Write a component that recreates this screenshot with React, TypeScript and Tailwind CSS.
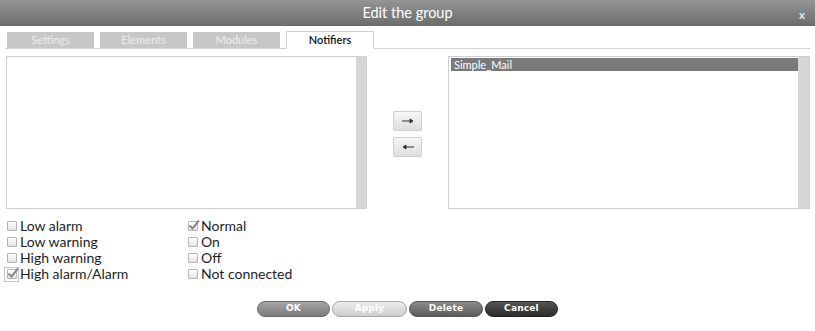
import { useState } from "react";

type Flag = { label: string; checked: boolean; focus?: boolean };

const LEFT_FLAGS: Flag[] = [
  { label: "Low alarm", checked: false },
  { label: "Low warning", checked: false },
  { label: "High warning", checked: false },
  { label: "High alarm/Alarm", checked: true, focus: true },
];

const RIGHT_FLAGS: Flag[] = [
  { label: "Normal", checked: true },
  { label: "On", checked: false },
  { label: "Off", checked: false },
  { label: "Not connected", checked: false },
];

const TABS = [
  { name: "Settings", w: "w-[87px]" },
  { name: "Elements", w: "w-[87px]" },
  { name: "Modules", w: "w-[87px]" },
  { name: "Notifiers", w: "w-[88px]" },
];

function CheckRow({ flag }: { flag: Flag }) {
  return (
    <div className="flex h-4 items-center">
      <span
        className={
          "flex h-[15px] w-[15px] items-center justify-center " +
          (flag.focus ? "border border-[#c8c8c8]" : "")
        }
      >
        <span className="relative block h-[10px] w-[10px] rounded-[1px] border border-[#b4b4b4] bg-gradient-to-b from-white to-[#e2e2e2]">
          {flag.checked && (
            <svg className="absolute -left-[1px] -top-[3px]" width="12" height="12" viewBox="0 0 12 12">
              <path d="M1.5 6.5 L4.5 9.5 L11 1.5" fill="none" stroke="#8a8a8a" strokeWidth="2" />
            </svg>
          )}
        </span>
      </span>
      <span className="pl-[1px] text-[14px] leading-4 text-[#1e1e1e]">{flag.label}</span>
    </div>
  );
}

function ArrowBtn({ dir }: { dir: "right" | "left" }) {
  return (
    <button className="flex h-[20px] w-[29px] items-center justify-center rounded-[2px] border border-[#cfcfcf] bg-gradient-to-b from-[#f7f7f7] to-[#dedede]">
      <svg width="14" height="6" viewBox="0 0 14 6">
        {dir === "right" ? (
          <path d="M1 3 H10 M9 1 L12 3 L9 5 Z" stroke="#333" strokeWidth="1" fill="#333" />
        ) : (
          <path d="M13 3 H4 M5 1 L2 3 L5 5 Z" stroke="#333" strokeWidth="1" fill="#333" />
        )}
      </svg>
    </button>
  );
}

function PillBtn({ label, cls }: { label: string; cls: string }) {
  return (
    <button
      className={
        "flex h-[16px] items-center justify-center rounded-full border font-['DejaVu_Sans',sans-serif] text-[9px] font-bold tracking-[0.2px] text-white " +
        cls
      }
    >
      {label}
    </button>
  );
}

export default function App() {
  const [tab, setTab] = useState("Notifiers");

  return (
    <div className="h-[331px] w-[815px] overflow-hidden bg-white font-['Lato',sans-serif]">
      {/* Title bar */}
      <div className="relative flex h-[26px] items-center justify-center bg-gradient-to-b from-[#959595] to-[#6c6c6c] text-white">
        <span className="text-[14.5px]">Edit the group</span>
        <span className="absolute right-[10px] top-[6px] text-[12px]">x</span>
      </div>

      {/* Tabs */}
      <div className="mx-[5px] mt-[6px] flex h-[17px] items-end gap-[6px] border-b border-[#d2d2d2] pl-[2px]">
        {TABS.map((t) =>
          t.name === tab ? (
            <button
              key={t.name}
              onClick={() => setTab(t.name)}
              className={"-mb-px h-[18px] border border-b-white border-[#d0d0d0] bg-white text-[11px] font-semibold text-[#111] " + t.w}
            >
              {t.name}
            </button>
          ) : (
            <button
              key={t.name}
              onClick={() => setTab(t.name)}
              className={"h-[16px] bg-[#c7c7c7] text-[11px] text-[#ececec] " + t.w}
            >
              {t.name}
            </button>
          )
        )}
      </div>

      {/* Lists */}
      <div className="mt-[7px] flex pl-[6px]">
        <div className="flex h-[153px] w-[361px] border border-[#cfcfcf]">
          <div className="flex-1" />
          <div className="w-[10px] bg-[#d6d6d6]" />
        </div>
        <div className="flex w-[81px] flex-col items-center justify-center gap-[6px] pt-[3px]">
          <ArrowBtn dir="right" />
          <ArrowBtn dir="left" />
        </div>
        <div className="flex h-[153px] w-[362px] border border-[#cfcfcf]">
          <div className="flex-1 pl-[2px] pt-[1px]">
            <div className="h-[13px] bg-[#7a7a7a] pl-[3px] text-[11px] leading-[13px] text-white">Simple_Mail</div>
          </div>
          <div className="w-[11px] bg-[#d6d6d6]" />
        </div>
      </div>

      {/* Flags */}
      <div className="mt-[9px] flex pl-[4px]">
        <div className="flex w-[181px] flex-col">
          {LEFT_FLAGS.map((f) => (
            <CheckRow key={f.label} flag={f} />
          ))}
        </div>
        <div className="flex flex-col">
          {RIGHT_FLAGS.map((f) => (
            <CheckRow key={f.label} flag={f} />
          ))}
        </div>
      </div>

      {/* Actions */}
      <div className="mt-[19px] flex pl-[257px] gap-[2px]">
        <PillBtn label="OK" cls="w-[73px] border-[#6a6a6a] bg-gradient-to-b from-[#a5a5a5] to-[#7b7b7b]" />
        <PillBtn label="Apply" cls="w-[75px] border-[#a8a8a8] bg-gradient-to-b from-[#ececec] to-[#cdcdcd]" />
        <PillBtn label="Delete" cls="w-[74px] border-[#555] bg-gradient-to-b from-[#8a8a8a] to-[#5c5c5c]" />
        <PillBtn label="Cancel" cls="w-[73px] border-[#222] bg-gradient-to-b from-[#555] to-[#2c2c2c]" />
      </div>
    </div>
  );
}
